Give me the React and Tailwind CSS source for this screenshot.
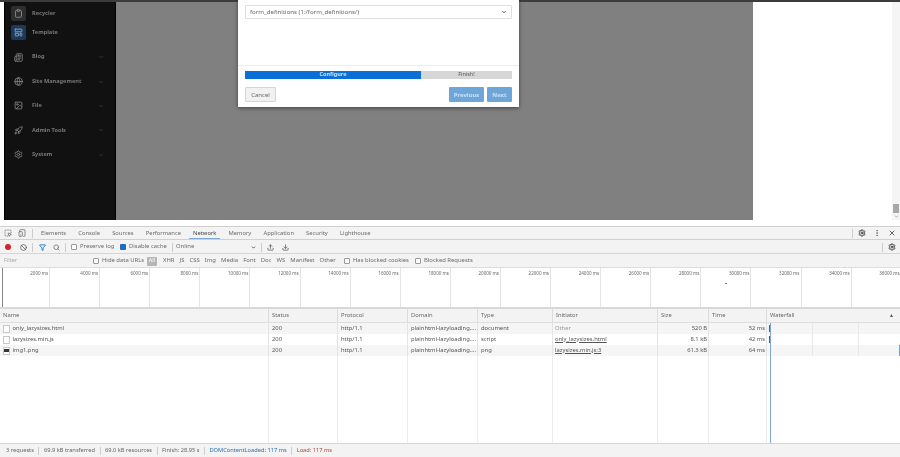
import React from "react";
import { Clipboard, LayoutTemplate, Image, Newspaper, Globe, Rocket, Settings, ChevronDown, Ban, Filter, Search, Upload, Download, MoreVertical, X, SquareDashedMousePointer, TabletSmartphone } from "lucide-react";

const navTop = [
  { label: "Recycler", Icon: Clipboard, box: "bg-[#2e2e2e]" },
  { label: "Template", Icon: LayoutTemplate, box: "bg-[#1a3a5c]" },
];
const navGroups = [
  { label: "Blog", Icon: Newspaper },
  { label: "Site Management", Icon: Globe },
  { label: "File", Icon: Image },
  { label: "Admin Tools", Icon: Rocket },
  { label: "System", Icon: Settings },
];
const tabs = ["Elements", "Console", "Sources", "Performance", "Network", "Memory", "Application", "Security", "Lighthouse"];
const types = ["XHR", "JS", "CSS", "Img", "Media", "Font", "Doc", "WS", "Manifest", "Other"];
const ticks = Array.from({ length: 18 }, (_, i) => (i + 1) * 2000);
const cols = [
  { n: "Name", w: "w-[269px]" },
  { n: "Status", w: "w-[69px]" },
  { n: "Protocol", w: "w-[70px]" },
  { n: "Domain", w: "w-[70px]" },
  { n: "Type", w: "w-[75px]" },
  { n: "Initiator", w: "w-[105px]" },
  { n: "Size", w: "w-[51px]" },
  { n: "Time", w: "w-[58px]" },
];
const rows = [
  { name: "only_lazysizes.html", icon: "doc", type: "document", init: "Other", link: false, size: "520 B", time: "52 ms", bg: "bg-[#f5f5f5]", tick: true },
  { name: "lazysizes.min.js", icon: "doc", type: "script", init: "only_lazysizes.html", link: true, size: "8.1 kB", time: "42 ms", bg: "bg-white", tick: true },
  { name: "img1.png", icon: "img", type: "png", init: "lazysizes.min.js:3", link: true, size: "61.3 kB", time: "64 ms", bg: "bg-[#f5f5f5]", tick: false },
];

function Check({ on }) {
  return on ? (
    <span className="block w-[6px] h-[6px] rounded-[1px] bg-[#1a6fc0] shrink-0" />
  ) : (
    <span className="block w-[6px] h-[6px] rounded-[1px] border border-[#9a9a9a] bg-white shrink-0" />
  );
}

export default function App() {
  return (
    <div className="w-[900px] h-[457px] overflow-hidden bg-white flex flex-col text-[#5a5a5a] font-['Noto_Sans',sans-serif] text-[6px] leading-none blur-[0.3px]">
      <div className="h-[220px] flex flex-col shrink-0">
        <div className="h-[2px] bg-[#3c3c3c] shrink-0" />
        <div className="flex flex-1 min-h-0">
          <div className="w-[4px] bg-white" />
          <aside className="w-[112px] bg-[#111111] border-x border-black flex flex-col pl-[6px] pr-[11px] pt-[2px] text-[#787878] font-bold text-[5.6px]">
            {navTop.map(({ label, Icon, box }) => (
              <div key={label} className="flex items-center gap-[6px] h-[19px]">
                <span className={`w-[15px] h-[15px] rounded-[2px] flex items-center justify-center ${box}`}>
                  <Icon size={9} strokeWidth={2.6} className={label === "Template" ? "text-[#8aa0b5]" : "text-[#858585]"} />
                </span>
                <span>{label}</span>
              </div>
            ))}
            <div className="h-[3px]" />
            {navGroups.map(({ label, Icon }) => (
              <div key={label} className="flex items-center gap-[6px] h-[24.4px]">
                <span className="w-[15px] flex justify-center">
                  <Icon size={9} strokeWidth={2.2} className="text-[#858585]" />
                </span>
                <span className="flex-1">{label}</span>
                <ChevronDown size={6} className="text-[#555]" />
              </div>
            ))}
          </aside>
          <main className="relative w-[637px] bg-[#808080]">
            <div className="absolute left-[122px] -top-[2px] w-[281px] h-[107px] bg-white shadow-[0_1px_4px_rgba(0,0,0,0.5)] flex flex-col px-[7px] pt-[5px] pb-[5px]">
              <div className="h-[14px] border border-[#ddd] rounded-[1px] flex items-center justify-between px-[4px] text-[#666] text-[6.1px] shrink-0">
                <span>form_definitions (1:/form_definitions/)</span>
                <ChevronDown size={6} strokeWidth={3} className="text-[#333]" />
              </div>
              <div className="flex-1 border-b border-[#eee] -mx-[7px]" />
              <div className="flex h-[8px] mt-[5px] shrink-0 text-[5.5px] font-bold">
                <div className="w-[176px] bg-[#0a6fd6] text-[#cfe2f7] flex items-center justify-center">Configure</div>
                <div className="flex-1 bg-[#d6d6d6] text-[#555] flex items-center justify-center font-normal">Finish!</div>
              </div>
              <div className="flex justify-between mt-[8px] shrink-0 text-[6px]">
                <button className="w-[31px] h-[15px] border border-[#d5d5d5] bg-[#f1f1f1] rounded-[1px] text-[#666]">Cancel</button>
                <div className="flex gap-[3px] font-bold text-[#cde0f2]">
                  <button className="w-[35px] h-[15px] bg-[#6ea6da] rounded-[1px]">Previous</button>
                  <button className="w-[25px] h-[15px] bg-[#6ea6da] rounded-[1px]">Next</button>
                </div>
              </div>
            </div>
          </main>
          <div className="flex-1 bg-white" />
          <div className="w-[8px] bg-[#f5f5f5] flex flex-col justify-end items-center pb-[1px]">
            <div className="w-[6px] h-[9px] bg-[#a8a8a8]" />
            <ChevronDown size={5} className="text-[#888] mt-[1px]" strokeWidth={3} />
          </div>
        </div>
      </div>

      <div className="h-[6px] bg-white shrink-0" />
      <div className="h-[14px] shrink-0 bg-[#f3f3f3] border-y border-[#d0d0d0] flex items-center pl-[4px] pr-[4px]">
        <SquareDashedMousePointer size={8} className="text-[#555]" />
        <TabletSmartphone size={8} className="text-[#555] ml-[6px]" />
        <span className="w-px h-[9px] bg-[#ccc] ml-[6px] mr-[8px]" />
        <div className="flex gap-[12.1px] text-[5.8px] items-center h-full pt-[1px]">
          {tabs.map((t) => (
            <span key={t} className={t === "Network" ? "h-full flex items-center text-[#444] relative" : "text-[#6a6a6a]"}>
              {t}
              {t === "Network" && <span className="absolute -left-[4px] -right-[4px] bottom-0 h-[1px] bg-[#7fa8d8]" />}
            </span>
          ))}
        </div>
        <span className="flex-1" />
        <span className="w-px h-[9px] bg-[#ccc] mr-[5px]" />
        <Settings size={8} strokeWidth={3} className="text-[#444]" />
        <MoreVertical size={8} className="text-[#555] ml-[7px]" />
        <X size={8} strokeWidth={2.5} className="text-[#444] ml-[7px]" />
      </div>
      <div className="h-[14px] shrink-0 bg-[#f3f3f3] border-b border-[#d5d5d5] flex items-center pl-[5px] pr-[4px] pt-[1px] text-[5.9px] text-[#6a6a6a]">
        <span className="w-[6px] h-[6px] rounded-full bg-[#d9202a]" />
        <Ban size={7} strokeWidth={2.5} className="text-[#555] ml-[9px]" />
        <span className="w-px h-[9px] bg-[#ccc] ml-[5px] mr-[6px]" />
        <Filter size={7} strokeWidth={3} className="text-[#1a6fc0]" />
        <Search size={7} strokeWidth={2.5} className="text-[#666] ml-[7px]" />
        <span className="w-px h-[9px] bg-[#ccc] ml-[5px] mr-[5px]" />
        <Check />
        <span className="ml-[3px] w-[37px] whitespace-nowrap">Preserve log</span>
        <span className="ml-[3px] block"><Check on /></span>
        <span className="ml-[3px] w-[40px] whitespace-nowrap">Disable cache</span>
        <span className="w-px h-[9px] bg-[#ccc] ml-[3px] mr-[3px]" />
        <span className="w-[80px] flex justify-between items-center">
          Online
          <ChevronDown size={5} strokeWidth={4} className="text-[#444]" />
        </span>
        <span className="w-px h-[9px] bg-[#ccc] ml-[5px] mr-[5px]" />
        <Upload size={7} strokeWidth={2.5} className="text-[#555]" />
        <Download size={7} strokeWidth={2.5} className="text-[#555] ml-[8px]" />
        <span className="flex-1" />
        <span className="w-px h-[9px] bg-[#ccc] mr-[5px]" />
        <Settings size={8} strokeWidth={3} className="text-[#444]" />
      </div>
      <div className="h-[13px] shrink-0 bg-[#f3f3f3] flex items-center pl-[4px] pt-[1px] text-[5.9px] text-[#6a6a6a]">
        <span className="w-[89px] text-[#aaa] text-[5.5px]">Filter</span>
        <Check />
        <span className="ml-[3px] w-[41px] whitespace-nowrap">Hide data URLs</span>
        <span className="ml-[4px] w-[10px] h-[9px] bg-[#b5b5b5] text-white rounded-[1px] flex items-center justify-center text-[5.5px]">All</span>
        <div className="flex gap-[5.1px] ml-[6px] w-[174px]">
          {types.map((t) => <span key={t}>{t}</span>)}
        </div>
        <span className="ml-[7px] block"><Check /></span>
        <span className="ml-[3px] w-[56px] whitespace-nowrap">Has blocked cookies</span>
        <span className="ml-[6px] block"><Check /></span>
        <span className="ml-[3px] whitespace-nowrap">Blocked Requests</span>
      </div>
      <div className="relative h-[42px] shrink-0 bg-white border-t border-b-[2px] border-t-[#ddd] border-b-[#d8d8d8] flex overflow-hidden">
        {ticks.map((t) => (
          <div key={t} className="w-[50.1px] shrink-0 h-full border-r border-[#e4e4e4] pt-[3px] pr-[1px] text-right text-[4.5px] text-[#666] whitespace-nowrap">
            {t} ms
          </div>
        ))}
        <span className="absolute left-[2px] top-0 bottom-0 w-px bg-[#888]" />
        <span className="absolute left-[725px] top-[15px] w-[2px] h-px bg-[#2a8a8a]" />
      </div>
      <div className="h-[14px] shrink-0 bg-[#f3f3f3] border-b border-[#dedede] flex text-[5.8px] text-[#666]">
        {cols.map((c) => (
          <div key={c.n} className={`${c.w} shrink-0 border-r border-[#dcdcdc] flex items-center pl-[3px]`}>{c.n}</div>
        ))}
        <div className="flex-1 flex items-center justify-between pl-[3px] pr-[6px]">
          Waterfall
          <span className="text-[5px] text-[#555]">▲</span>
        </div>
      </div>
      <div className="relative flex-1 min-h-0 flex flex-col text-[5.8px] text-[#555]">
        <div className="flex flex-col">
          {rows.map((r) => (
            <div key={r.name} className={`h-[11px] flex ${r.bg}`}>
              <div className="w-[269px] shrink-0 border-r border-[#e4e4e4] flex items-center pl-[3px] gap-[3px]">
                <span className="w-[6.5px] h-[8px] border border-[#c8c8c8] bg-white shrink-0 flex items-center justify-center">
                  {r.icon === "img" && <span className="w-[4.5px] h-[3px] bg-[#333]" />}
                </span>
                {r.name}
              </div>
              <div className="w-[69px] shrink-0 border-r border-[#e4e4e4] flex items-center pl-[3px]">200</div>
              <div className="w-[70px] shrink-0 border-r border-[#e4e4e4] flex items-center pl-[3px]">http/1.1</div>
              <div className="w-[70px] shrink-0 border-r border-[#e4e4e4] flex items-center pl-[3px] whitespace-nowrap overflow-hidden">plainhtml-lazyloading....</div>
              <div className="w-[75px] shrink-0 border-r border-[#e4e4e4] flex items-center pl-[3px]">{r.type}</div>
              <div className={`w-[105px] shrink-0 border-r border-[#e4e4e4] flex items-center pl-[2px] ${r.link ? "underline" : "text-[#999]"}`}>{r.init}</div>
              <div className="w-[51px] shrink-0 border-r border-[#e4e4e4] flex items-center justify-end pr-[1px]">{r.size}</div>
              <div className="w-[58px] shrink-0 border-r border-[#e4e4e4] flex items-center justify-end pr-[1px]">{r.time}</div>
              <div className="flex-1 grid grid-cols-[46px_46px_1fr]">
                <div className="border-r border-[#e8e8e8] flex items-center">
                  {r.tick && <span className="w-px h-[7px] ml-[2px] bg-[#1a6fc0]" />}
                </div>
                <div className="border-r border-[#e8e8e8]" />
                <div />
              </div>
            </div>
          ))}
        </div>
        <div className="flex-1 flex">
          {cols.map((c) => (
            <div key={c.n} className={`${c.w} shrink-0 border-r border-[#ececec]`} />
          ))}
        </div>
        <span className="absolute left-[770px] top-0 bottom-0 w-px bg-[#7fa8d8]" />
        <span className="absolute right-0 top-[22px] w-px h-[11px] bg-[#6ea6da]" />
      </div>
      <div className="h-[14px] shrink-0 bg-[#f3f3f3] border-t border-[#d5d5d5] flex items-center pl-[6px] text-[5.7px] text-[#666]">
        {[
          ["3 requests", ""],
          ["69.9 kB transferred", ""],
          ["69.0 kB resources", ""],
          ["Finish: 28.95 s", ""],
          ["DOMContentLoaded: 117 ms", "text-[#2a6fb0]"],
          ["Load: 117 ms", "text-[#b5403a]"],
        ].map(([t, c], i) => (
          <React.Fragment key={t}>
            {i > 0 && <span className="w-px h-[8px] bg-[#ccc] mx-[4.5px]" />}
            <span className={c}>{t}</span>
          </React.Fragment>
        ))}
      </div>
    </div>
  );
}
